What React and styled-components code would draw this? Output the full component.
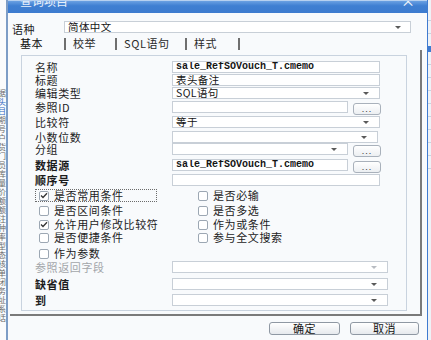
import React from 'react';
import styled, { createGlobalStyle } from 'styled-components';

const GlobalStyle = createGlobalStyle`
    html, body {
        margin: 0;
        padding: 0;
        background: #fff;
    }
    body {
        width: 431px;
        height: 340px;
        overflow: hidden;
        font-family: "Noto Sans CJK SC", "Noto Sans", sans-serif;
        color: #1c1c1c;
    }
    * {
        box-sizing: border-box;
    }
`;

const Screen = styled.div`
    display: flex;
    width: 431px;
    height: 340px;
    overflow: hidden;
`;

const BackLeft = styled.div`
    width: 6px;
    background: #fafbfc;
    overflow: hidden;
    padding-top: 88px;
    display: flex;
    flex-direction: column;
    align-items: flex-end;
`;

const BackLine = styled.div`
    height: 9px;
    font-size: 8px;
    line-height: 9px;
    white-space: nowrap;
    color: ${p => (p.$blue ? '#2f66c0' : '#6a6a6a')};
`;

const BackRight = styled.div`
    width: 4px;
    background: #eef2f7;
    border-left: 1px solid #3f7bd0;
    display: flex;
    flex-direction: column;
    padding-top: 20px;
    gap: 12px;
`;

const BackRule = styled.div`
    height: ${p => (p.$blue ? 6 : 1)}px;
    background: ${p => (p.$blue ? '#3f7bd0' : '#c9d3df')};
`;

const Dialog = styled.div`
    width: 421px;
    display: flex;
    flex-direction: column;
    border-left: 2px solid #7d9dc6;
    background: #f8fafc;
`;

const TitleBar = styled.div`
    height: 13px;
    background: linear-gradient(#6aa0e2, #3f7fd2 40%, #3d7bcf);
    border-top: 1px solid #b6d0f0;
    display: flex;
    justify-content: space-between;
    overflow: hidden;
    color: #fff;
    padding: 0 12px;
`;

const TitleText = styled.span`
    font-size: 12px;
    line-height: 12px;
    margin-top: -6px;
    color: #e8f0fb;
`;

const CloseGlyph = styled.span`
    font-size: 14px;
    line-height: 12px;
    margin-top: -7px;
    color: #f4f7fb;
`;

const LangRow = styled.div`
    display: flex;
    align-items: center;
    height: 12px;
    margin-top: 8px;
    padding-left: 4px;
`;

const LangLabel = styled.span`
    width: 52px;
    font-size: 11px;
    letter-spacing: 0.6px;
    line-height: 11px;
    margin-top: 4px;
`;

const TabStrip = styled.div`
    display: flex;
    align-items: center;
    height: 13px;
    margin-top: 4px;
    padding-left: 5px;
`;

const Tab = styled.span`
    width: ${p => p.$w}px;
    padding-left: 7px;
    font-size: 11px;
    letter-spacing: 0.6px;
    line-height: 11px;
    white-space: nowrap;
    color: ${p => (p.$active ? '#0d0d0d' : '#2a2a2a')};
`;

const TabSep = styled.span`
    width: 2px;
    height: 12px;
    background: #6f6f6f;
`;

const TabPage = styled.div`
    margin-left: 2px;
    width: 412px;
    height: 266px;
    border-right: 2px solid #7a7a7a;
    border-bottom: 2px solid #7a7a7a;
    padding: 5px 0 0 11px;
`;

const GroupBox = styled.div`
    width: 386px;
    height: 256px;
    border: 1px solid #c9d3df;
    padding-left: 13px;
`;

const Row = styled.div`
    display: flex;
    align-items: flex-start;
    height: 12px;
    margin-top: ${p => p.$mt}px;
`;

const Label = styled.span`
    width: 137px;
    font-size: 11px;
    letter-spacing: 0.6px;
    line-height: 11px;
    margin-top: 1px;
    white-space: nowrap;
    font-weight: ${p => (p.$bold ? 700 : 400)};
    color: ${p => (p.$disabled ? '#a3a6aa' : '#1c1c1c')};
`;

const Field = styled.div`
    position: relative;
    width: ${p => p.$w}px;
    height: 12px;
    background: #fff;
    border: 1px solid #c8cfd7;
    padding-left: 3px;
    display: flex;
    align-items: center;
    overflow: hidden;
    font-size: 10.5px;
    letter-spacing: 0.4px;
    line-height: 10px;
    white-space: nowrap;
    color: #151515;
`;

const Mono = styled.span`
    font-family: "Liberation Mono", monospace;
    font-size: 10px;
    letter-spacing: 0;
    font-weight: 700;
`;

const Arrow = styled.span`
    position: absolute;
    right: ${p => p.$r || 10}px;
    top: 4px;
    width: 0;
    height: 0;
    border-left: 3px solid transparent;
    border-right: 3px solid transparent;
    border-top: 3px solid ${p => (p.$disabled ? '#b8bcc2' : '#5a5a5a')};
`;

const DotsButton = styled.div`
    width: 28px;
    height: 12px;
    margin-left: 5px;
    margin-top: 2px;
    border: 1px solid #a9b1bb;
    border-radius: 3px;
    background: linear-gradient(#ffffff, #eceff2);
    display: flex;
    align-items: center;
    justify-content: center;
    font-family: "Liberation Sans", sans-serif;
    font-size: 9px;
    line-height: 6px;
    letter-spacing: 1px;
    color: #333;
`;

const CheckGrid = styled.div`
    display: grid;
    grid-template-columns: 159px 1fr;
    grid-template-rows: 15px 14px 13px 16px 12px;
    margin-top: 3px;
`;

const CheckItem = styled.div`
    display: flex;
    align-items: center;
    gap: 5px;
    height: 13px;
    padding-left: 3px;
    width: ${p => (p.$focus ? '122px' : 'auto')};
    border: 1px ${p => (p.$focus ? 'dotted #6b6b6b' : 'solid transparent')};
    font-size: 11px;
    letter-spacing: 0.6px;
    line-height: 11px;
    white-space: nowrap;
`;

const Box = styled.span`
    width: 10px;
    height: 10px;
    flex: none;
    border: 1px solid #9ca7b3;
    border-radius: 2px;
    background: #fff;
    display: flex;
    align-items: center;
    justify-content: center;
`;

const ButtonBar = styled.div`
    display: flex;
    justify-content: flex-end;
    gap: 10px;
    margin-top: 6px;
    padding-right: 8px;
`;

const Button = styled.div`
    width: ${p => p.$w}px;
    height: 13px;
    border: 1px solid #8f98a3;
    border-radius: 3px;
    background: linear-gradient(#ffffff, #e6e9ed);
    display: flex;
    align-items: center;
    justify-content: center;
    font-size: 11px;
    letter-spacing: 0.6px;
    line-height: 11px;
    color: #151515;
`;

const Check = ({checked}) => (
    <Box>
        {checked && (
            <svg width="8" height="7" viewBox="0 0 8 7">
                <polyline points="1,3.5 3,5.5 7,1.2" fill="none" stroke="#333" strokeWidth="1.3" />
            </svg>
        )}
    </Box>
);

const CheckBox = ({checked, focus, children}) => (
    <CheckItem $focus={focus}>
        <Check checked={checked} />
        <span>{children}</span>
    </CheckItem>
);

const backLines = [
    {t: '单据'}, {t: '表头', blue: true}, {t: '项目', blue: true}, {t: '日期'}, {t: '编号'},
    {t: '客户'}, {t: '存货'}, {t: '部门'}, {t: '人员'}, {t: '仓库'}, {t: '数量'},
    {t: '单价'}, {t: '金额'}, {t: '税额'}, {t: '备注'}, {t: '币种'}, {t: '汇率'},
    {t: '类型'}, {t: '状态'}, {t: '审核'}, {t: '制单'}, {t: '关闭'}, {t: '业务'},
    {t: '地址'}, {t: '联系'}, {t: '电话'},
];

export default function App() {
    return (
        <Screen>
            <GlobalStyle />
            <BackLeft>
                {backLines.map((l, i) => <BackLine key={i} $blue={l.blue}>{l.t}</BackLine>)}
            </BackLeft>
            <Dialog>
                <TitleBar>
                    <TitleText>查询项目</TitleText>
                    <CloseGlyph>×</CloseGlyph>
                </TitleBar>

                <LangRow>
                    <LangLabel>语种</LangLabel>
                    <Field $w={347}>简体中文<Arrow $r={9} /></Field>
                </LangRow>

                <TabStrip>
                    <Tab $w={51} $active>基本</Tab>
                    <TabSep />
                    <Tab $w={49}>校举</Tab>
                    <TabSep />
                    <Tab $w={68}>SQL语句</Tab>
                    <TabSep />
                    <Tab $w={51}>样式</Tab>
                    <TabSep />
                </TabStrip>

                <TabPage>
                    <GroupBox>
                        <Row $mt={5}>
                            <Label>名称</Label>
                            <Field $w={208}><Mono>sale_RefSOVouch_T.cmemo</Mono></Field>
                        </Row>
                        <Row $mt={1}>
                            <Label>标题</Label>
                            <Field $w={208}>表头备注</Field>
                        </Row>
                        <Row $mt={1}>
                            <Label>编辑类型</Label>
                            <Field $w={208}>SQL语句<Arrow /></Field>
                        </Row>
                        <Row $mt={2}>
                            <Label>参照ID</Label>
                            <Field $w={176} />
                            <DotsButton>...</DotsButton>
                        </Row>
                        <Row $mt={3}>
                            <Label>比较符</Label>
                            <Field $w={208}>等于<Arrow /></Field>
                        </Row>
                        <Row $mt={3}>
                            <Label>小数位数</Label>
                            <Field $w={206}><Arrow /></Field>
                        </Row>
                        <Row $mt={0}>
                            <Label>分组</Label>
                            <Field $w={176}><Arrow /></Field>
                            <DotsButton>...</DotsButton>
                        </Row>
                        <Row $mt={4}>
                            <Label $bold>数据源</Label>
                            <Field $w={176}><Mono>sale_RefSOVouch_T.cmemo</Mono></Field>
                            <DotsButton>...</DotsButton>
                        </Row>
                        <Row $mt={3}>
                            <Label $bold>顺序号</Label>
                            <Field $w={208} />
                        </Row>

                        <CheckGrid>
                            <CheckBox checked focus>是否常用条件</CheckBox>
                            <CheckBox>是否必输</CheckBox>
                            <CheckBox>是否区间条件</CheckBox>
                            <CheckBox>是否多选</CheckBox>
                            <CheckBox checked>允许用户修改比较符</CheckBox>
                            <CheckBox>作为或条件</CheckBox>
                            <CheckBox>是否便捷条件</CheckBox>
                            <CheckBox>参与全文搜索</CheckBox>
                            <CheckBox>作为参数</CheckBox>
                        </CheckGrid>

                        <Row $mt={2}>
                            <Label $disabled>参照返回字段</Label>
                            <Field $w={216}><Arrow $disabled /></Field>
                        </Row>
                        <Row $mt={5}>
                            <Label $bold>缺省值</Label>
                            <Field $w={216}><Arrow /></Field>
                        </Row>
                        <Row $mt={4}>
                            <Label $bold>到</Label>
                            <Field $w={216}><Arrow /></Field>
                        </Row>
                    </GroupBox>
                </TabPage>

                <ButtonBar>
                    <Button $w={71}>确定</Button>
                    <Button $w={69}>取消</Button>
                </ButtonBar>
            </Dialog>
            <BackRight>
                <BackRule />
                <BackRule />
                <BackRule $blue />
                <BackRule />
                <BackRule />
                <BackRule />
                <BackRule />
                <BackRule />
                <BackRule />
                <BackRule />
                <BackRule />
                <BackRule />
            </BackRight>
        </Screen>
    );
}
